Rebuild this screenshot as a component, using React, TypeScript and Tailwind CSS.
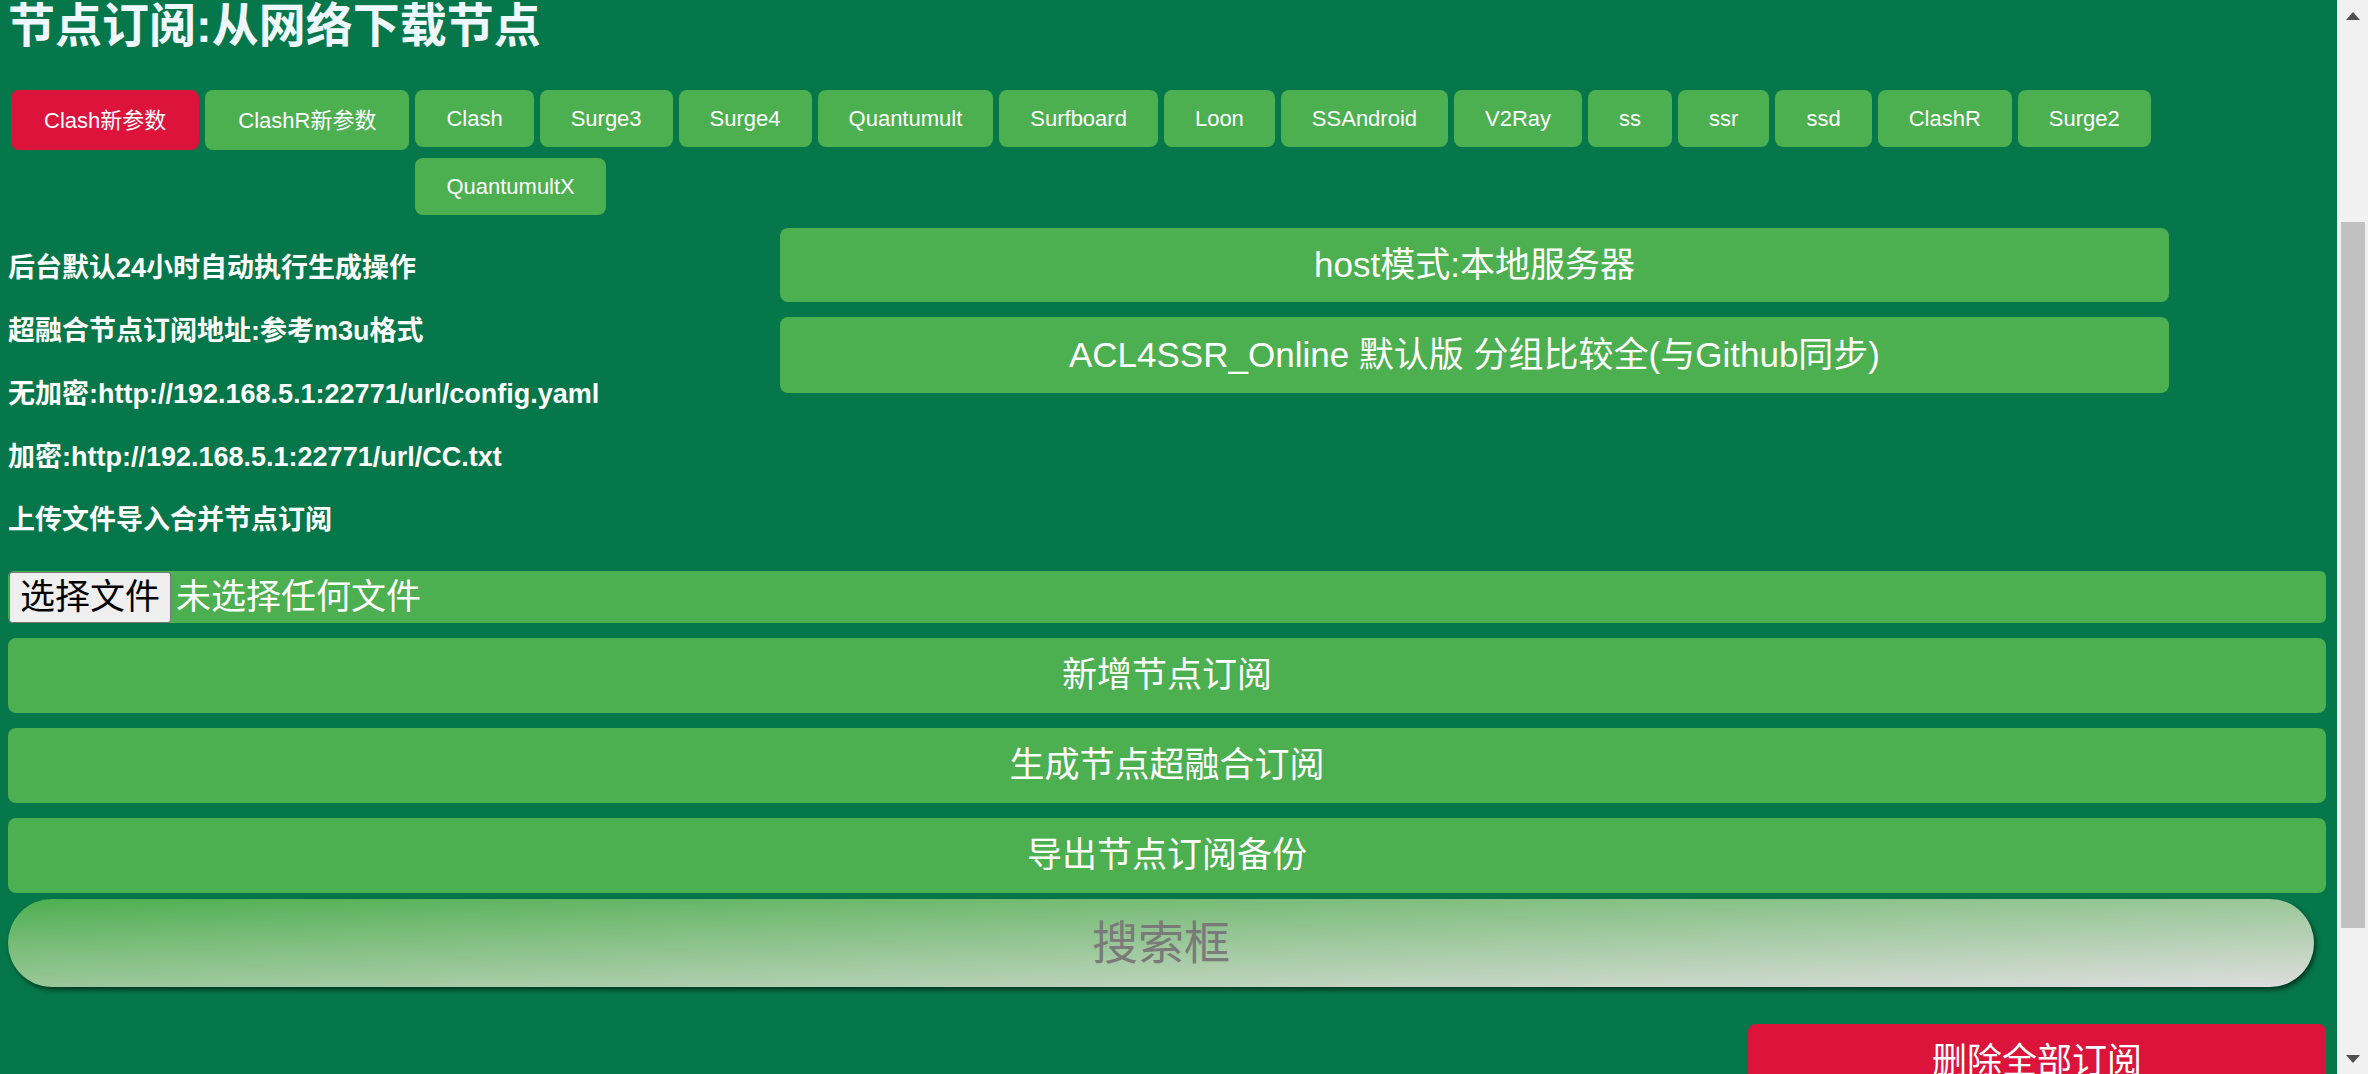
const FONT = "font-['Liberation_Sans','Noto_Sans_CJK_SC',sans-serif]";

const clientsA = ["Clash新参数", "ClashR新参数"];
const clientsB = [
  "Clash",
  "Surge3",
  "Surge4",
  "Quantumult",
  "Surfboard",
  "Loon",
  "SSAndroid",
  "V2Ray",
  "ss",
  "ssr",
  "ssd",
  "ClashR",
  "Surge2",
  "QuantumultX",
];

const infoLines = [
  "后台默认24小时自动执行生成操作",
  "超融合节点订阅地址:参考m3u格式",
  "无加密:http://192.168.5.1:22771/url/config.yaml",
  "加密:http://192.168.5.1:22771/url/CC.txt",
  "上传文件导入合并节点订阅",
];

function ClientButton({ label, active, tall }: { label: string; active?: boolean; tall?: boolean }) {
  return (
    <button
      className={
        "flex shrink-0 items-center justify-center rounded-[8px] text-[22px] text-white " +
        (tall ? "h-[60px] px-[33px] " : "h-[57px] px-[31px] ") +
        (active ? "bg-[#dc143c]" : "bg-[#4caf50]")
      }
    >
      {label}
    </button>
  );
}

function WideButton({ label }: { label: string }) {
  return (
    <button className="mt-[15px] flex h-[75px] w-full shrink-0 items-center justify-center rounded-[8px] bg-[#4caf50] text-[35px] text-white">
      {label}
    </button>
  );
}

function Scrollbar() {
  return (
    <div className="flex h-full w-[31px] shrink-0 flex-col border-l border-[#e6e6e6] bg-[#f1f1f1]">
      <div className="flex h-[31px] shrink-0 items-center justify-center">
        <svg width="14" height="8" viewBox="0 0 14 8">
          <path d="M7 0 L14 8 L0 8 Z" fill="#505050" />
        </svg>
      </div>
      <div className="h-[191px] shrink-0" />
      <div className="mx-[3px] h-[706px] shrink-0 bg-[#c1c1c1]" />
      <div className="flex-1" />
      <div className="flex h-[31px] shrink-0 items-center justify-center">
        <svg width="14" height="8" viewBox="0 0 14 8">
          <path d="M0 0 L14 0 L7 8 Z" fill="#505050" />
        </svg>
      </div>
    </div>
  );
}

export default function App() {
  return (
    <div className={"flex h-[1074px] w-full overflow-hidden bg-[#06774a] " + FONT}>
      <div className="flex min-w-0 flex-1 flex-col pl-[8px] pr-[11px]">
        {/* title */}
        <h1 className="h-[50px] shrink-0 text-[47px] font-bold leading-[52px] text-[#f0f8ff]">
          节点订阅:从网络下载节点
        </h1>

        {/* client buttons */}
        <div className="ml-[3px] mt-[40px] flex shrink-0 items-start gap-x-[6px]">
          {clientsA.map((c, i) => (
            <ClientButton key={c} label={c} active={i === 0} tall />
          ))}
          <div className="flex flex-1 flex-wrap gap-x-[6px] gap-y-[11px]">
            {clientsB.map((c) => (
              <ClientButton key={c} label={c} />
            ))}
          </div>
        </div>

        {/* info + host selectors */}
        <div className="mt-[13px] flex shrink-0">
          <div className="flex w-[772px] flex-col pt-[9px]">
            {infoLines.map((t) => (
              <div key={t} className="h-[63px] text-[27px] font-bold leading-[63px] text-white">
                {t}
              </div>
            ))}
          </div>
          <div className="flex w-[1389px] flex-col">
            <button className="flex h-[74px] items-center justify-center rounded-[8px] bg-[#4caf50] text-[35px] text-white">
              host模式:本地服务器
            </button>
            <button className="mt-[15px] flex h-[76px] items-center justify-center rounded-[8px] bg-[#4caf50] text-[35px] text-white">
              ACL4SSR_Online 默认版 分组比较全(与Github同步)
            </button>
          </div>
        </div>

        {/* file input */}
        <div className="mt-[19px] flex h-[52px] shrink-0 items-center rounded-[6px] bg-[#4caf50] pl-[1px]">
          <span className="flex h-[51px] items-center rounded-[3px] border border-[#767676] bg-[#efefef] px-[10px] text-[35px] text-black">
            选择文件
          </span>
          <span className="ml-[5px] text-[35px] text-white">未选择任何文件</span>
        </div>

        <WideButton label="新增节点订阅" />
        <WideButton label="生成节点超融合订阅" />
        <WideButton label="导出节点订阅备份" />

        {/* search */}
        <input
          placeholder="搜索框"
          className="mr-[12px] mt-[6px] h-[88px] shrink-0 rounded-full bg-linear-to-br from-[#4caf50] to-[#dddddd] text-center text-[46px] text-[#666] shadow-[2px_3px_5px_rgba(0,0,0,0.55)] outline-none placeholder:text-[#7a7a7a]"
        />

        <div className="mt-[37px] flex shrink-0 justify-end">
          <button className="flex h-[75px] w-[578px] shrink-0 items-center justify-center rounded-[8px] bg-[#dc143c] text-[35px] text-white">
            删除全部订阅
          </button>
        </div>
      </div>
      <Scrollbar />
    </div>
  );
}
